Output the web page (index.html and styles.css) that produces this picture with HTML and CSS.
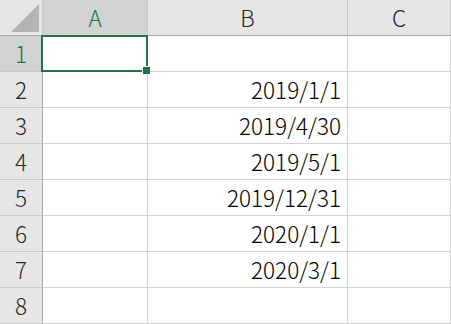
FILE: index.html
```html
<!DOCTYPE html>
<html lang="ja">
<head>
  <meta charset="UTF-8" />
  <title>Sheet1</title>
  <link rel="stylesheet" href="styles.css">
</head>
<body>
  <div class="sheet">
    <div class="corner"><span class="tri"></span></div>
    <div class="colhead sel">A</div>
    <div class="colhead">B</div>
    <div class="colhead">C</div>

    <div class="rowhead sel">1</div>
    <div class="cell active"><span class="handle"></span></div>
    <div class="cell"></div>
    <div class="cell"></div>

    <div class="rowhead">2</div>
    <div class="cell"></div>
    <div class="cell num">2019/1/1</div>
    <div class="cell"></div>

    <div class="rowhead">3</div>
    <div class="cell"></div>
    <div class="cell num">2019/4/30</div>
    <div class="cell"></div>

    <div class="rowhead">4</div>
    <div class="cell"></div>
    <div class="cell num">2019/5/1</div>
    <div class="cell"></div>

    <div class="rowhead">5</div>
    <div class="cell"></div>
    <div class="cell num">2019/12/31</div>
    <div class="cell"></div>

    <div class="rowhead">6</div>
    <div class="cell"></div>
    <div class="cell num">2020/1/1</div>
    <div class="cell"></div>

    <div class="rowhead">7</div>
    <div class="cell"></div>
    <div class="cell num">2020/3/1</div>
    <div class="cell"></div>

    <div class="rowhead">8</div>
    <div class="cell"></div>
    <div class="cell"></div>
    <div class="cell"></div>
  </div>
</body>
</html>
```
FILE: styles.css
```css
body {
  margin: 0;
  background: #fff;
  font-family: "Noto Sans CJK JP", "Noto Sans", sans-serif;
  font-weight: 300;
  overflow: hidden;
}
.sheet {
  display: grid;
  grid-template-columns: 43px 105px 200px 1fr;
  grid-template-rows: 36px repeat(8, 36px);
  width: 451px;
  font-size: 22.5px;
  color: #000;
}
.sheet > div {
  box-sizing: border-box;
  display: flex;
  align-items: center;
  line-height: 1;
}
.corner {
  background: #e6e6e6;
  border-right: 1px solid #c8c8c8;
  border-bottom: 1px solid #a8a8a8;
  position: relative;
}
.tri {
  position: absolute;
  right: 3px;
  bottom: 3px;
  width: 28px;
  height: 28px;
  background: #b4b4b4;
  clip-path: polygon(100% 0, 100% 100%, 0 100%);
}
.colhead {
  background: #e6e6e6;
  border-right: 1px solid #c8c8c8;
  border-bottom: 1px solid #a8a8a8;
  justify-content: center;
  color: #262626;
}
.rowhead {
  background: #e6e6e6;
  border-right: 1px solid #a8a8a8;
  border-bottom: 1px solid #c8c8c8;
  justify-content: center;
  color: #262626;
}
.colhead.sel, .rowhead.sel {
  background: #d2d2d2;
  color: #217346;
}
.cell {
  border-right: 1px solid #d4d4d4;
  border-bottom: 1px solid #d4d4d4;
  position: relative;
}
.cell.num {
  justify-content: flex-end;
  padding-right: 6px;
}
.cell.active::after {
  content: "";
  position: absolute;
  left: -2px;
  top: -1px;
  right: -1px;
  bottom: -1px;
  border: 2px solid #217346;
}
.handle {
  position: absolute;
  right: -3px;
  bottom: -3px;
  width: 7px;
  height: 7px;
  background: #217346;
  border-left: 1px solid #fff;
  border-top: 1px solid #fff;
  z-index: 1;
}
```
